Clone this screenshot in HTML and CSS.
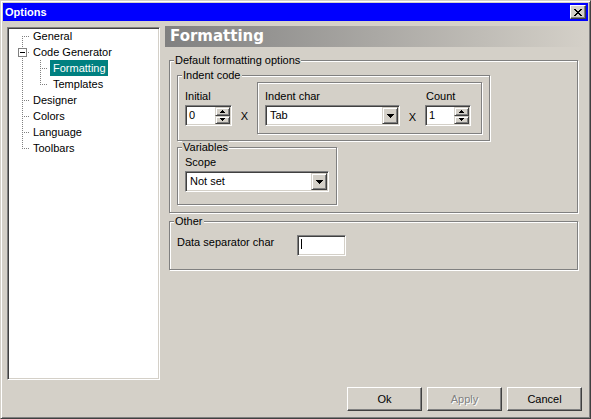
FILE: index.html
```html
<!DOCTYPE html>
<html>
<head>
<meta charset="utf-8">
<title>Options</title>
<link rel="stylesheet" href="styles.css">
</head>
<body>
<div class="window">
  <div class="titlebar">
    <span class="title">Options</span>
    <button class="close" aria-label="Close">
      <svg width="8" height="7" viewBox="0 0 8 7"><path d="M0 0h2v1h1v1h2V1h1V0h2v1H7v1H6v1H5v1h1v1h1v1h1v1H6V6H5V5H3v1H2v1H0V6h1V5h1V4h1V3H2V2H1V1H0z" fill="#000"/></svg>
    </button>
  </div>
  <div class="main">
    <div class="upper">
      <div class="tree">
        <div class="node top first">General</div>
        <div class="node top parent"><span class="expander"></span><span>Code Generator</span></div>
        <div class="node child"><span class="leaf selected">Formatting</span></div>
        <div class="node child lastchild"><span class="leaf">Templates</span></div>
        <div class="node top">Designer</div>
        <div class="node top">Colors</div>
        <div class="node top">Language</div>
        <div class="node top last">Toolbars</div>
      </div>
      <div class="content">
        <div class="heading">Formatting</div>
        <div class="group g-default">
          <span class="legend">Default formatting options</span>
          <div class="group g-indent">
            <span class="legend">Indent code</span>
            <div class="field f-initial">
              <span class="lbl">Initial</span>
              <div class="spin sunken">
                <span class="val">0</span>
                <span class="sbtns">
                  <span class="sbtn"><svg width="5" height="3" viewBox="0 0 5 3"><path d="M2 0h1v1h1v1h1v1H0V2h1V1h1z"/></svg></span>
                  <span class="sbtn"><svg width="5" height="3" viewBox="0 0 5 3"><path d="M0 0h5v1H4v1H3v1H2V2H1V1H0z"/></svg></span>
                </span>
              </div>
            </div>
            <span class="times">X</span>
            <div class="group charbox">
              <div class="field f-char">
                <span class="lbl">Indent char</span>
                <div class="combo sunken">
                  <span class="val">Tab</span>
                  <span class="drop"><svg width="7" height="4" viewBox="0 0 7 4"><path d="M0 0h7v1H6v1H5v1H4v1H3V3H2V2H1V1H0z"/></svg></span>
                </div>
              </div>
              <span class="times t2">X</span>
              <div class="field f-count">
                <span class="lbl">Count</span>
                <div class="spin sunken">
                  <span class="val">1</span>
                  <span class="sbtns">
                    <span class="sbtn"><svg width="5" height="3" viewBox="0 0 5 3"><path d="M2 0h1v1h1v1h1v1H0V2h1V1h1z"/></svg></span>
                    <span class="sbtn"><svg width="5" height="3" viewBox="0 0 5 3"><path d="M0 0h5v1H4v1H3v1H2V2H1V1H0z"/></svg></span>
                  </span>
                </div>
              </div>
            </div>
          </div>
          <div class="group g-vars">
            <span class="legend">Variables</span>
            <span class="lbl">Scope</span>
            <div class="combo sunken c-scope">
              <span class="val">Not set</span>
              <span class="drop"><svg width="7" height="4" viewBox="0 0 7 4"><path d="M0 0h7v1H6v1H5v1H4v1H3V3H2V2H1V1H0z"/></svg></span>
            </div>
          </div>
        </div>
        <div class="group g-other">
          <span class="legend">Other</span>
          <span class="lbl sep-lbl">Data separator char</span>
          <div class="textin sunken"><span class="caret"></span></div>
        </div>
      </div>
    </div>
    <div class="buttons">
      <button class="btn">Ok</button>
      <button class="btn disabled">Apply</button>
      <button class="btn">Cancel</button>
    </div>
  </div>
</div>
</body>
</html>
```

FILE: styles.css
```css
* { box-sizing: border-box; }
html, body { margin: 0; padding: 0; }
body {
  font-family: "Liberation Sans", Arial, sans-serif;
  font-size: 11px;
  color: #000;
  background: #d4d0c8;
}

.window {
  width: 591px;
  height: 419px;
  background: #d4d0c8;
  border: 1px solid;
  border-color: #d4d0c8 #404040 #404040 #d4d0c8;
  box-shadow: inset 1px 1px 0 #fff, inset -1px -1px 0 #808080;
  padding: 2px;
  display: flex;
  flex-direction: column;
}

.titlebar {
  height: 18px;
  flex: none;
  background: #0000ff;
  display: flex;
  align-items: center;
  justify-content: space-between;
  padding: 0 2px 0 2px;
}
.title { color: #fff; font-weight: bold; font-size: 11px; }
.close {
  width: 16px;
  height: 14px;
  padding: 0;
  margin: 0;
  background: #d4d0c8;
  border: 1px solid;
  border-color: #fff #404040 #404040 #fff;
  box-shadow: inset -1px -1px 0 #808080;
  display: flex;
  align-items: center;
  justify-content: center;
}
.close svg { display: block; shape-rendering: crispEdges; }

.main {
  flex: 1;
  display: flex;
  flex-direction: column;
  padding: 5px 3px 5px 4px;
}
.upper { display: flex; align-items: flex-start; }

/* tree */
.tree {
  width: 153px;
  height: 353px;
  margin-top: 1px;
  background: #fff;
  border: 1px solid;
  border-color: #808080 #fff #fff #808080;
  box-shadow: inset 1px 1px 0 #404040, inset -1px -1px 0 #d4d0c8;
  padding: 0 1px;
  --dv: repeating-linear-gradient(to bottom, #808080 0 1px, transparent 1px 2px);
  --dh: repeating-linear-gradient(to right, #808080 0 1px, transparent 1px 2px);
}
.node {
  height: 16px;
  line-height: 16px;
  display: flex;
  align-items: center;
  white-space: nowrap;
  padding-left: 24px;
  background-image: var(--dv), var(--dh);
  background-repeat: no-repeat;
  background-position: 13px 0, 13px 8px;
  background-size: 1px 16px, 8px 1px;
}
.node.first { background-position: 13px 8px, 13px 8px; background-size: 1px 8px, 8px 1px; }
.node.last { background-size: 1px 9px, 8px 1px; }
.node.parent { padding-left: 9px; align-items: flex-start; }
.expander {
  width: 9px;
  height: 9px;
  margin-top: 4px;
  margin-right: 6px;
  border: 1px solid #808080;
  background: linear-gradient(#000, #000) center / 5px 1px no-repeat, #fff;
}
.node.child {
  padding-left: 41px;
  background-image: var(--dv), var(--dv), var(--dh);
  background-position: 13px 0, 31px 0, 31px 8px;
  background-size: 1px 16px, 1px 16px, 8px 1px;
}
.node.child.lastchild { background-size: 1px 16px, 1px 9px, 8px 1px; }
.leaf { padding: 0 2px 0 3px; height: 16px; }
.leaf.selected { background: #008080; color: #fff; }

/* right side */
.content { margin-left: 5px; width: 420px; }
.heading {
  height: 21px;
  background: linear-gradient(to right, #808080, #d4d0c8);
  color: #fff;
  font: bold 15px/21px "DejaVu Sans", sans-serif;
  padding-left: 5px;
}

.group {
  position: relative;
  border: 1px solid #808080;
  box-shadow: inset 1px 1px 0 #fff, 1px 1px 0 #fff;
}
.legend {
  position: absolute;
  top: -7px;
  left: 4px;
  padding: 0 1px;
  background: #d4d0c8;
  line-height: 13px;
  white-space: nowrap;
}
.lbl { display: block; line-height: 13px; white-space: nowrap; }

.g-default {
  margin: 13px 0 0 4px;
  width: 409px;
  height: 153px;
  padding: 14px 0 0 7px;
}
.g-indent {
  width: 313px;
  height: 66px;
  padding: 6px 7px 0 7px;
  display: flex;
  align-items: flex-start;
}
.field { display: flex; flex-direction: column; }
.field .lbl { margin-top: 8px; margin-bottom: 2px; }
.f-initial { width: 47px; }
.times {
  width: 25px;
  text-align: center;
  line-height: 13px;
  margin-top: 28px;
}
.charbox {
  width: 225px;
  height: 52px;
  padding: 0 0 0 7px;
  display: flex;
  align-items: flex-start;
}
.charbox .field .lbl { margin-top: 7px; }
.charbox .times { margin-top: 28px; }
.f-char { width: 135px; }
.f-count { width: 46px; }
.f-count .lbl { padding-left: 1px; }

.sunken {
  border: 1px solid;
  border-color: #808080 #fff #fff #808080;
  box-shadow: inset 1px 1px 0 #404040, inset -1px -1px 0 #d4d0c8;
  padding: 1px;
  background: #fff;
}
.raised {
  border: 1px solid;
}
.spin { display: flex; height: 21px; width: 100%; }
.val { flex: 1; line-height: 17px; padding-left: 2px; white-space: nowrap; }
.sbtns { width: 15px; display: flex; flex-direction: column; }
.sbtn {
  flex: 1;
  background: #d4d0c8;
  border: 1px solid;
  border-color: #d4d0c8 #404040 #404040 #d4d0c8;
  box-shadow: inset 1px 1px 0 #fff, inset -1px -1px 0 #808080;
  display: flex;
  align-items: center;
  justify-content: center;
}
.sbtn svg, .drop svg { display: block; shape-rendering: crispEdges; }

.combo { display: flex; height: 21px; width: 100%; }
.combo .val { padding-left: 3px; }
.drop {
  width: 16px;
  background: #d4d0c8;
  border: 1px solid;
  border-color: #d4d0c8 #404040 #404040 #d4d0c8;
  box-shadow: inset 1px 1px 0 #fff, inset -1px -1px 0 #808080;
  display: flex;
  align-items: center;
  justify-content: center;
}

.g-vars {
  margin-top: 6px;
  width: 160px;
  height: 58px;
  padding: 8px 7px 0 7px;
}
.g-vars .lbl { margin-bottom: 2px; }
.c-scope { width: 144px; }

.g-other {
  margin: 8px 0 0 4px;
  width: 409px;
  height: 49px;
  padding: 13px 7px 0 7px;
  display: flex;
  align-items: flex-start;
}
.sep-lbl { width: 120px; margin-top: 1px; }
.textin { width: 49px; height: 21px; padding: 3px 2px; }
.caret { display: block; width: 1px; height: 10px; margin-left: 1px; background: #000; }

.buttons {
  display: flex;
  justify-content: flex-end;
  gap: 5px;
  margin-top: 7px;
  padding-right: 3px;
}
.btn {
  width: 75px;
  height: 24px;
  margin: 0;
  padding: 0;
  font-family: "Liberation Sans", Arial, sans-serif;
  font-size: 11px;
  color: #000;
  background: #d4d0c8;
  border: 1px solid;
  border-color: #fff #404040 #404040 #fff;
  box-shadow: inset -1px -1px 0 #808080;
}
.btn.disabled { color: #808080; text-shadow: 1px 1px 0 #fff; }
```
